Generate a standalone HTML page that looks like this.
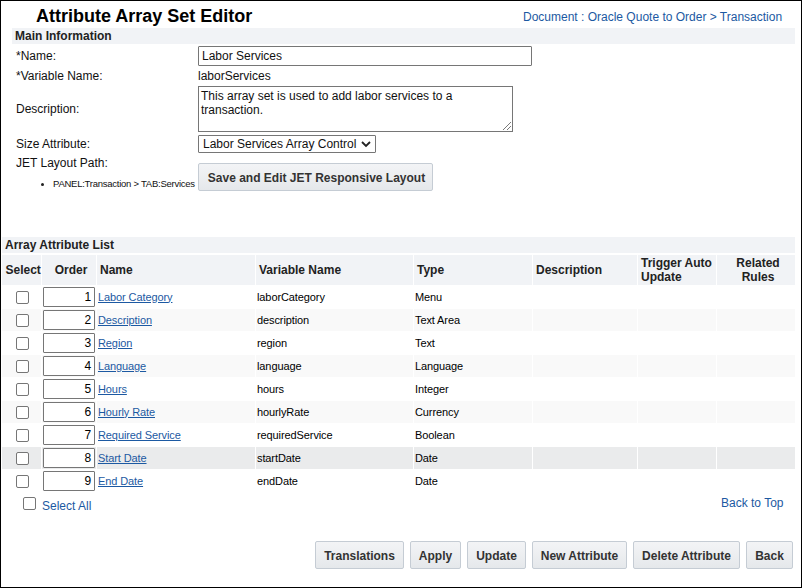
<!DOCTYPE html>
<html><head><meta charset="utf-8">
<style>
*{box-sizing:border-box}
html,body{margin:0;padding:0}
body{width:802px;height:588px;position:relative;overflow:hidden;background:#fff;font-family:"Liberation Sans",sans-serif;color:#000}
.frame{position:absolute;left:0;top:0;width:802px;height:588px;border:1px solid #000}
.abs{position:absolute;white-space:nowrap}
.t12{font-size:12px;line-height:14px}
.title{left:36px;top:6px;font-size:18px;font-weight:bold;line-height:21px;color:#000}
.crumb{left:523px;top:10px;color:#1c59a2}
.bar{position:absolute;background:#f1f3f6;height:16px;font-weight:bold;font-size:12px;line-height:16px;color:#222}
.lbl{left:16px;color:#111}
.inp{position:absolute;border:1px solid #767676;border-radius:1px;background:#fff;font-size:12px;line-height:14px;color:#111}
.btn{position:absolute;height:28px;border:1px solid #c5ccd4;border-radius:2px;background:linear-gradient(#f3f4f6,#e5e8eb);font-weight:bold;font-size:12px;line-height:28px;color:#333;text-align:center;white-space:nowrap}
.link{color:#1c59a2}
table.list{position:absolute;left:1px;top:254px;border-collapse:separate;border-spacing:1px;font-size:11px;table-layout:fixed;width:795px}
table.list th{background:#f1f3f6;height:30px;padding:0 3px;font-size:12px;font-weight:bold;color:#222;text-align:left;line-height:14px;vertical-align:middle}
table.list td{height:22px;padding:0 1px;vertical-align:middle;line-height:13px;color:#000;letter-spacing:-0.1px}
table.list tr.g td{background:#f9f9f9}
table.list tr.h td{background:#eaebec}
table.list td a{color:#1c59a2;text-decoration:underline}
.cb{display:block;width:13px;height:13px;border:1px solid #767676;border-radius:2px;background:#fff;margin-left:13px}
.ord{width:52px;height:20px;border:1px solid #767676;border-radius:1px;background:#fff;text-align:right;padding-right:3px;font-size:12px;line-height:18px;margin-left:0px}
</style></head><body>
<div class="frame"></div>
<div class="abs title">Attribute Array Set Editor</div>
<div class="abs t12 crumb">Document : Oracle Quote to Order &gt; Transaction</div>

<div class="bar" style="left:12px;top:28px;width:783px;padding-left:3px">Main Information</div>

<div class="abs t12 lbl" style="top:49px">*Name:</div>
<div class="inp" style="left:198px;top:46px;width:334px;height:20px;padding:2px 0 0 3px">Labor Services</div>

<div class="abs t12 lbl" style="top:69px">*Variable Name:</div>
<div class="abs t12" style="left:198px;top:69px;color:#111">laborServices</div>

<div class="abs t12 lbl" style="top:102px">Description:</div>
<div class="inp" style="left:198px;top:86px;width:315px;height:46px;padding:2px 0 0 2px;white-space:normal;border-radius:0">This array set is used to add labor services to a transaction.</div>

<div class="abs t12 lbl" style="top:137px">Size Attribute:</div>
<div class="inp" style="left:198px;top:135px;width:178px;height:18px;padding:1px 0 0 4px">Labor Services Array Control</div>

<svg class="abs" style="left:0;top:0" width="802" height="588" shape-rendering="crispEdges"><rect x="503" y="129" width="1" height="1" fill="#7a7a7a"/><rect x="504" y="128" width="1" height="1" fill="#7a7a7a"/><rect x="505" y="127" width="1" height="1" fill="#7a7a7a"/><rect x="506" y="126" width="1" height="1" fill="#7a7a7a"/><rect x="507" y="125" width="1" height="1" fill="#7a7a7a"/><rect x="508" y="124" width="1" height="1" fill="#7a7a7a"/><rect x="509" y="123" width="1" height="1" fill="#7a7a7a"/><rect x="510" y="122" width="1" height="1" fill="#7a7a7a"/><rect x="507" y="129" width="1" height="1" fill="#7a7a7a"/><rect x="508" y="128" width="1" height="1" fill="#7a7a7a"/><rect x="509" y="127" width="1" height="1" fill="#7a7a7a"/><rect x="510" y="126" width="1" height="1" fill="#7a7a7a"/></svg>
<svg class="abs" style="left:356px;top:136px" width="20" height="16"><polyline points="6,6 10,10 14,6" fill="none" stroke="#222" stroke-width="1.8"/></svg>
<div class="abs t12 lbl" style="top:156px">JET Layout Path:</div>
<div class="abs" style="left:41px;top:183px;width:3px;height:3px;border-radius:50%;background:#222"></div>
<div class="abs" style="left:53px;top:178px;font-size:9.5px;line-height:11px;color:#111;letter-spacing:-0.25px">PANEL:Transaction &gt; TAB:Services</div>
<div class="btn" style="left:198px;top:163px;width:235px;padding-left:2px">Save and Edit JET Responsive Layout</div>

<div class="bar" style="left:2px;top:237px;width:793px;padding-left:3px">Array Attribute List</div>

<table class="list">
<colgroup><col style="width:39px"><col style="width:54px"><col style="width:158px"><col style="width:157px"><col style="width:118px"><col style="width:104px"><col style="width:78px"><col style="width:78px"></colgroup>
<tr><th style="text-align:left;padding-left:3.5px;padding-right:0">Select</th><th style="text-align:center;padding:0 1px 0 5px">Order</th><th>Name</th><th>Variable Name</th><th>Type</th><th>Description</th><th>Trigger Auto Update</th><th style="text-align:center;padding:0 1px 0 5px">Related Rules</th></tr>
<tr><td><span class="cb"></span></td><td><div class="ord">1</div></td><td><a>Labor Category</a></td><td>laborCategory</td><td>Menu</td><td></td><td></td><td></td></tr>
<tr class="g"><td><span class="cb"></span></td><td><div class="ord">2</div></td><td><a>Description</a></td><td>description</td><td>Text Area</td><td></td><td></td><td></td></tr>
<tr><td><span class="cb"></span></td><td><div class="ord">3</div></td><td><a>Region</a></td><td>region</td><td>Text</td><td></td><td></td><td></td></tr>
<tr class="g"><td><span class="cb"></span></td><td><div class="ord">4</div></td><td><a>Language</a></td><td>language</td><td>Language</td><td></td><td></td><td></td></tr>
<tr><td><span class="cb"></span></td><td><div class="ord">5</div></td><td><a>Hours</a></td><td>hours</td><td>Integer</td><td></td><td></td><td></td></tr>
<tr class="g"><td><span class="cb"></span></td><td><div class="ord">6</div></td><td><a>Hourly Rate</a></td><td>hourlyRate</td><td>Currency</td><td></td><td></td><td></td></tr>
<tr><td><span class="cb"></span></td><td><div class="ord">7</div></td><td><a>Required Service</a></td><td>requiredService</td><td>Boolean</td><td></td><td></td><td></td></tr>
<tr class="h"><td><span class="cb"></span></td><td><div class="ord">8</div></td><td><a>Start Date</a></td><td>startDate</td><td>Date</td><td></td><td></td><td></td></tr>
<tr><td><span class="cb"></span></td><td><div class="ord">9</div></td><td><a>End Date</a></td><td>endDate</td><td>Date</td><td></td><td></td><td></td></tr>
</table>

<div class="abs" style="left:23px;top:497px;width:13px;height:13px;border:1px solid #767676;border-radius:2px"></div>
<div class="abs t12 link" style="left:42px;top:499px">Select All</div>
<div class="abs t12 link" style="left:721px;top:496px">Back to Top</div>

<div class="btn" style="left:315px;top:541px;width:89px">Translations</div>
<div class="btn" style="left:410px;top:541px;width:51px">Apply</div>
<div class="btn" style="left:467px;top:541px;width:59px">Update</div>
<div class="btn" style="left:532px;top:541px;width:95px">New Attribute</div>
<div class="btn" style="left:633px;top:541px;width:107px">Delete Attribute</div>
<div class="btn" style="left:746px;top:541px;width:47px">Back</div>
</body></html>
